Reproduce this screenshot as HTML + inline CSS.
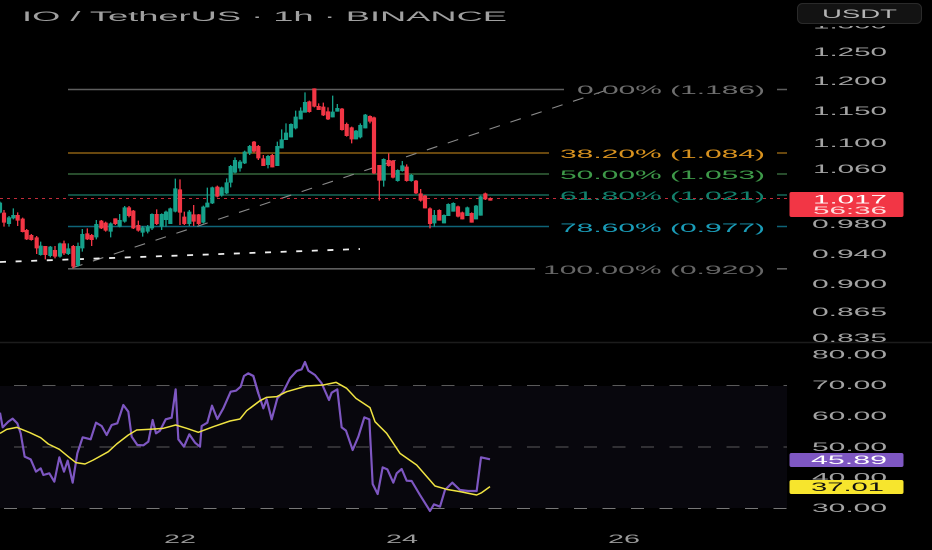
<!DOCTYPE html>
<html><head><meta charset="utf-8">
<style>
html,body{margin:0;padding:0;background:#000;width:932px;height:550px;overflow:hidden}
svg{display:block;filter:blur(.35px)}
text{font-family:"Liberation Sans",sans-serif}
.w{stroke-width:4;fill:none}
.b{stroke-width:12.5;fill:none}
.r text{font-size:11.5px;fill:#a3a3a3}
.f text{font-size:12px}
</style></head><body>
<svg width="932" height="550" viewBox="0 0 932 550" xmlns="http://www.w3.org/2000/svg">
<rect width="932" height="550" fill="#000"/>
<!-- RSI panel -->
<rect x="0" y="386" width="787" height="122" fill="#08070d"/>
<path d="M0 342.5H932" stroke="#1c1c1c" stroke-width="1.5"/>
<g stroke="#5a5a5a" stroke-width="1" stroke-dasharray="13 15.5" fill="none">
<path d="M0 385.5H787" stroke-dashoffset="-14"/>
<path d="M0 447H787" stroke-dashoffset="-14"/>
<path d="M0 508.5H787" stroke-dashoffset="-4" stroke="#777"/>
</g>
<!-- Fib lines -->
<g stroke-width="1.6" fill="none">
<path d="M68 89.5H564M777 89.5H787" stroke="#5e5e5e"/>
<path d="M68 153H549M777 153H787" stroke="#8a5f12"/>
<path d="M68 174H549M777 174H787" stroke="#35653b"/>
<path d="M68 195H549M777 195H787" stroke="#156858"/>
<path d="M68 226.5H549M777 226.5H787" stroke="#0e6478"/>
<path d="M68 268.8H535M777 268.8H787" stroke="#5e5e5e"/>
</g>
<!-- diagonal -->
<path d="M72 268L610 89" stroke="#8a8a8a" stroke-width="1.1" stroke-dasharray="11 11" fill="none"/>
<!-- white dashed -->
<path d="M0 262L360 249" stroke="#eee" stroke-width="1.8" stroke-dasharray="6 9.6" fill="none"/>
<!-- price line -->
<path d="M0 198.5H790" stroke="#c22c3a" stroke-width="1" stroke-dasharray="3 4" fill="none"/>
<!-- candles left -->
<g transform="translate(0 80) scale(.33333)">
<path class="w" stroke="#16a08a" d="M0 365V400M27 408V440M40 385V418M122 485V527M151 498V532M180 488V533M205 490V525M234 488V560M247 447V515M289 420V478M332 427V472M359 402V442M374 378V428M428 438V470M443 435V460M456 400V450M485 400V450M498 392V440M511 383V432M526 296V397M568 390V438M610 377V430M622 323V382M637 320V372M665 320V350M680 295V342M692 255V322M705 232V280"/>
<path class="b" stroke="#16a08a" d="M0 368V398M27 412V432M40 405V415M122 497V525M151 500V528M180 490V530M205 505V522M234 498V557M247 462V505M289 432V472M332 430V455M359 420V440M374 382V425M428 442V458M443 440V455M456 402V445M485 402V440M498 395V420M511 385V432M526 325V395M568 395V432M610 380V428M622 368V382M637 322V370M665 322V347M680 307V340M692 258V308M705 240V278"/>
<path class="w" stroke="#f23645" d="M12 390V440M53 397V438M68 413V457M80 447V480M94 462V482M110 468V522M136 498V538M165 498V535M192 482V525M220 495V565M262 445V480M275 462V498M304 420V447M317 425V455M346 415V435M387 378V412M400 390V447M415 422V455M470 388V435M540 298V435M553 395V435M581 375V438M596 402V435M652 317V352"/>
<path class="b" stroke="#f23645" d="M12 398V428M53 405V422M68 416V456M80 450V478M94 465V480M110 472V505M136 498V525M165 510V530M192 490V520M220 498V560M262 460V478M275 465V480M304 422V445M317 428V452M346 415V432M387 382V408M400 392V445M415 435V452M470 402V432M540 328V398M553 410V432M581 403V425M596 403V432M652 320V350"/>
</g>
<!-- candles right -->
<g transform="translate(240 80) scale(.33333)">
<path class="w" stroke="#16a08a" d="M0 240V275M14 212V252M29 195V225M84 225V265M112 185V258M125 148V205M138 130V180M153 130V172M167 92V148M182 82V118M195 37V98M278 47V112M292 72V95M348 150V178M361 130V175M376 102V145M431 235V320M473 268V305M487 243V275M514 282V305M583 390V440M612 403V430M625 370V408M640 367V395M682 380V408M708 375V418M722 347V407"/>
<path class="b" stroke="#16a08a" d="M0 245V265M14 215V250M29 198V220M84 228V255M112 198V258M125 178V205M138 158V180M153 132V172M167 110V145M182 92V118M195 66V98M278 95V112M292 84V95M348 152V178M361 135V172M376 104V145M431 237V302M473 270V303M487 256V273M514 285V303M583 405V430M612 405V430M625 372V408M640 369V395M682 382V408M708 377V418M722 349V407"/>
<path class="w" stroke="#f23645" d="M42 183V218M55 195V240M70 225V258M97 222V262M208 62V98M223 25V82M236 70V90M250 68V108M264 82V120M306 84V152M320 128V170M335 140V190M390 106V130M402 110V282M418 255V362M446 220V260M459 240V295M500 253V305M528 300V342M542 327V365M555 345V385M570 382V445M598 388V422M654 377V412M667 395V418M695 397V428M736 338V360M751 352V362"/>
<path class="b" stroke="#f23645" d="M42 185V215M55 198V235M70 235V258M97 225V262M208 64V96M223 25V80M236 78V90M250 80V106M264 94V118M306 86V150M320 132V168M335 142V178M390 108V125M402 112V280M418 255V302M446 240V258M459 242V293M500 260V303M528 302V340M542 340V362M555 347V385M570 385V432M598 390V422M654 379V410M667 397V418M695 399V428M736 340V358M751 354V362"/>
</g>
<!-- RSI lines -->
<g transform="translate(0 340) scale(.33333)" fill="none" stroke-linejoin="round">
<path stroke="#7e57c2" stroke-width="6.5" d="M0 218L8 262L25 245L38 236L52 250L62 280L74 350L92 358L108 395L122 385L130 405L148 400L163 425L178 352L192 395L203 362L218 428L232 340L248 292L272 298L288 248L305 258L320 285L335 255L352 250L370 195L385 215L395 290L412 315L430 316L445 305L458 240L468 280L480 272L497 238L515 233L527 148L535 298L552 320L568 283L585 308L600 320L605 258L622 248L636 197L652 237L670 205L692 155L708 152L722 140L732 108L745 100L760 108L775 160"/>
<path stroke="#f0e442" stroke-width="4.5" d="M0 280L20 268L50 262L90 278L122 293L145 312L178 328L205 350L228 368L255 372L280 360L325 335L350 312L385 285L410 270L445 268L490 265L527 255L560 265L595 277L640 260L690 243L720 237L740 212L780 182"/>
</g>
<g transform="translate(250 340) scale(.33333)" fill="none" stroke-linejoin="round">
<path stroke="#7e57c2" stroke-width="6.5" d="M0 103L10 108L25 160L40 205L50 178L65 238L82 175L100 155L120 115L140 93L155 88L165 66L175 92L195 105L215 130L237 180L245 158L262 148L275 262L288 272L308 330L325 290L343 232L358 238L368 432L383 462L398 382L412 388L430 428L440 400L455 387L470 422L485 423L510 465L540 513L552 493L570 500L585 450L607 428L630 450L655 453L680 453L693 352L720 358"/>
<path stroke="#f0e442" stroke-width="4.5" d="M0 205L30 182L50 172L80 170L110 155L170 138L220 135L258 127L290 145L318 175L360 203L375 245L410 280L450 340L500 375L555 438L590 448L630 455L680 465L695 458L720 440"/>
</g>
<!-- Fib labels -->
<g class="f">
<text x="577" y="94" textLength="188" lengthAdjust="spacingAndGlyphs" fill="#6e6e6e">0.00% (1.186)</text>
<text x="560" y="158" textLength="205" lengthAdjust="spacingAndGlyphs" fill="#d8921f">38.20% (1.084)</text>
<text x="560" y="179" textLength="205" lengthAdjust="spacingAndGlyphs" fill="#3e9a49">50.00% (1.053)</text>
<text x="560" y="200" textLength="205" lengthAdjust="spacingAndGlyphs" fill="#12806c">61.80% (1.021)</text>
<text x="560" y="232" textLength="205" lengthAdjust="spacingAndGlyphs" fill="#1a9cb8">78.60% (0.977)</text>
<text x="543" y="274" textLength="222" lengthAdjust="spacingAndGlyphs" fill="#666">100.00% (0.920)</text>
</g>
<!-- Title -->
<text x="22" y="21" font-size="13.5" textLength="485" lengthAdjust="spacingAndGlyphs" fill="#a0a0a0">IO / TetherUS · 1h · BINANCE</text>
<!-- Right axis -->
<g class="r">
<text x="813" y="28.5" textLength="74" lengthAdjust="spacingAndGlyphs">1.300</text>
<rect x="790" y="0" width="142" height="26" fill="#000"/>
<text x="813" y="56" textLength="74" lengthAdjust="spacingAndGlyphs">1.250</text>
<text x="813" y="85" textLength="74" lengthAdjust="spacingAndGlyphs">1.200</text>
<text x="813" y="115" textLength="74" lengthAdjust="spacingAndGlyphs">1.150</text>
<text x="813" y="147" textLength="74" lengthAdjust="spacingAndGlyphs">1.100</text>
<text x="813" y="173" textLength="74" lengthAdjust="spacingAndGlyphs">1.060</text>
<text x="812" y="228" textLength="75" lengthAdjust="spacingAndGlyphs">0.980</text>
<text x="812" y="258" textLength="75" lengthAdjust="spacingAndGlyphs">0.940</text>
<text x="812" y="288" textLength="75" lengthAdjust="spacingAndGlyphs">0.900</text>
<text x="812" y="316" textLength="75" lengthAdjust="spacingAndGlyphs">0.865</text>
<text x="812" y="342" textLength="75" lengthAdjust="spacingAndGlyphs">0.835</text>
<text x="812" y="358.5" textLength="75" lengthAdjust="spacingAndGlyphs">80.00</text>
<text x="812" y="389" textLength="75" lengthAdjust="spacingAndGlyphs">70.00</text>
<text x="812" y="420" textLength="75" lengthAdjust="spacingAndGlyphs">60.00</text>
<text x="812" y="451" textLength="75" lengthAdjust="spacingAndGlyphs">50.00</text>
<text x="812" y="481.5" textLength="75" lengthAdjust="spacingAndGlyphs">40.00</text>
<text x="812" y="512" textLength="75" lengthAdjust="spacingAndGlyphs">30.00</text>
</g>
<!-- USDT -->
<rect x="797.5" y="3.5" width="124" height="20" rx="5" fill="#131313" stroke="#2a2a2a"/>
<text x="822" y="18" font-size="12" textLength="75" lengthAdjust="spacingAndGlyphs" fill="#b5b5b5">USDT</text>
<!-- price tags -->
<rect x="789.5" y="192" width="114" height="25" rx="2" fill="#f23645"/>
<text x="813" y="203.5" font-size="11.5" textLength="74" lengthAdjust="spacingAndGlyphs" fill="#fff">1.017</text>
<text x="813" y="214" font-size="11" textLength="74" lengthAdjust="spacingAndGlyphs" fill="#fdd">56:36</text>
<rect x="789.5" y="453" width="114" height="14" rx="2" fill="#7e57c2"/>
<text x="811" y="464" font-size="11.5" textLength="76" lengthAdjust="spacingAndGlyphs" fill="#fff">45.89</text>
<rect x="789.5" y="480" width="114" height="14" rx="2" fill="#f7e52d"/>
<text x="811" y="491" font-size="11.5" textLength="73" lengthAdjust="spacingAndGlyphs" fill="#111">37.01</text>
<!-- Time axis -->
<g font-size="11.5" fill="#9a9a9a">
<text x="164" y="543" textLength="32" lengthAdjust="spacingAndGlyphs">22</text>
<text x="386" y="543" textLength="32" lengthAdjust="spacingAndGlyphs">24</text>
<text x="608" y="543" textLength="32" lengthAdjust="spacingAndGlyphs">26</text>
</g>
</svg>
</body></html>
